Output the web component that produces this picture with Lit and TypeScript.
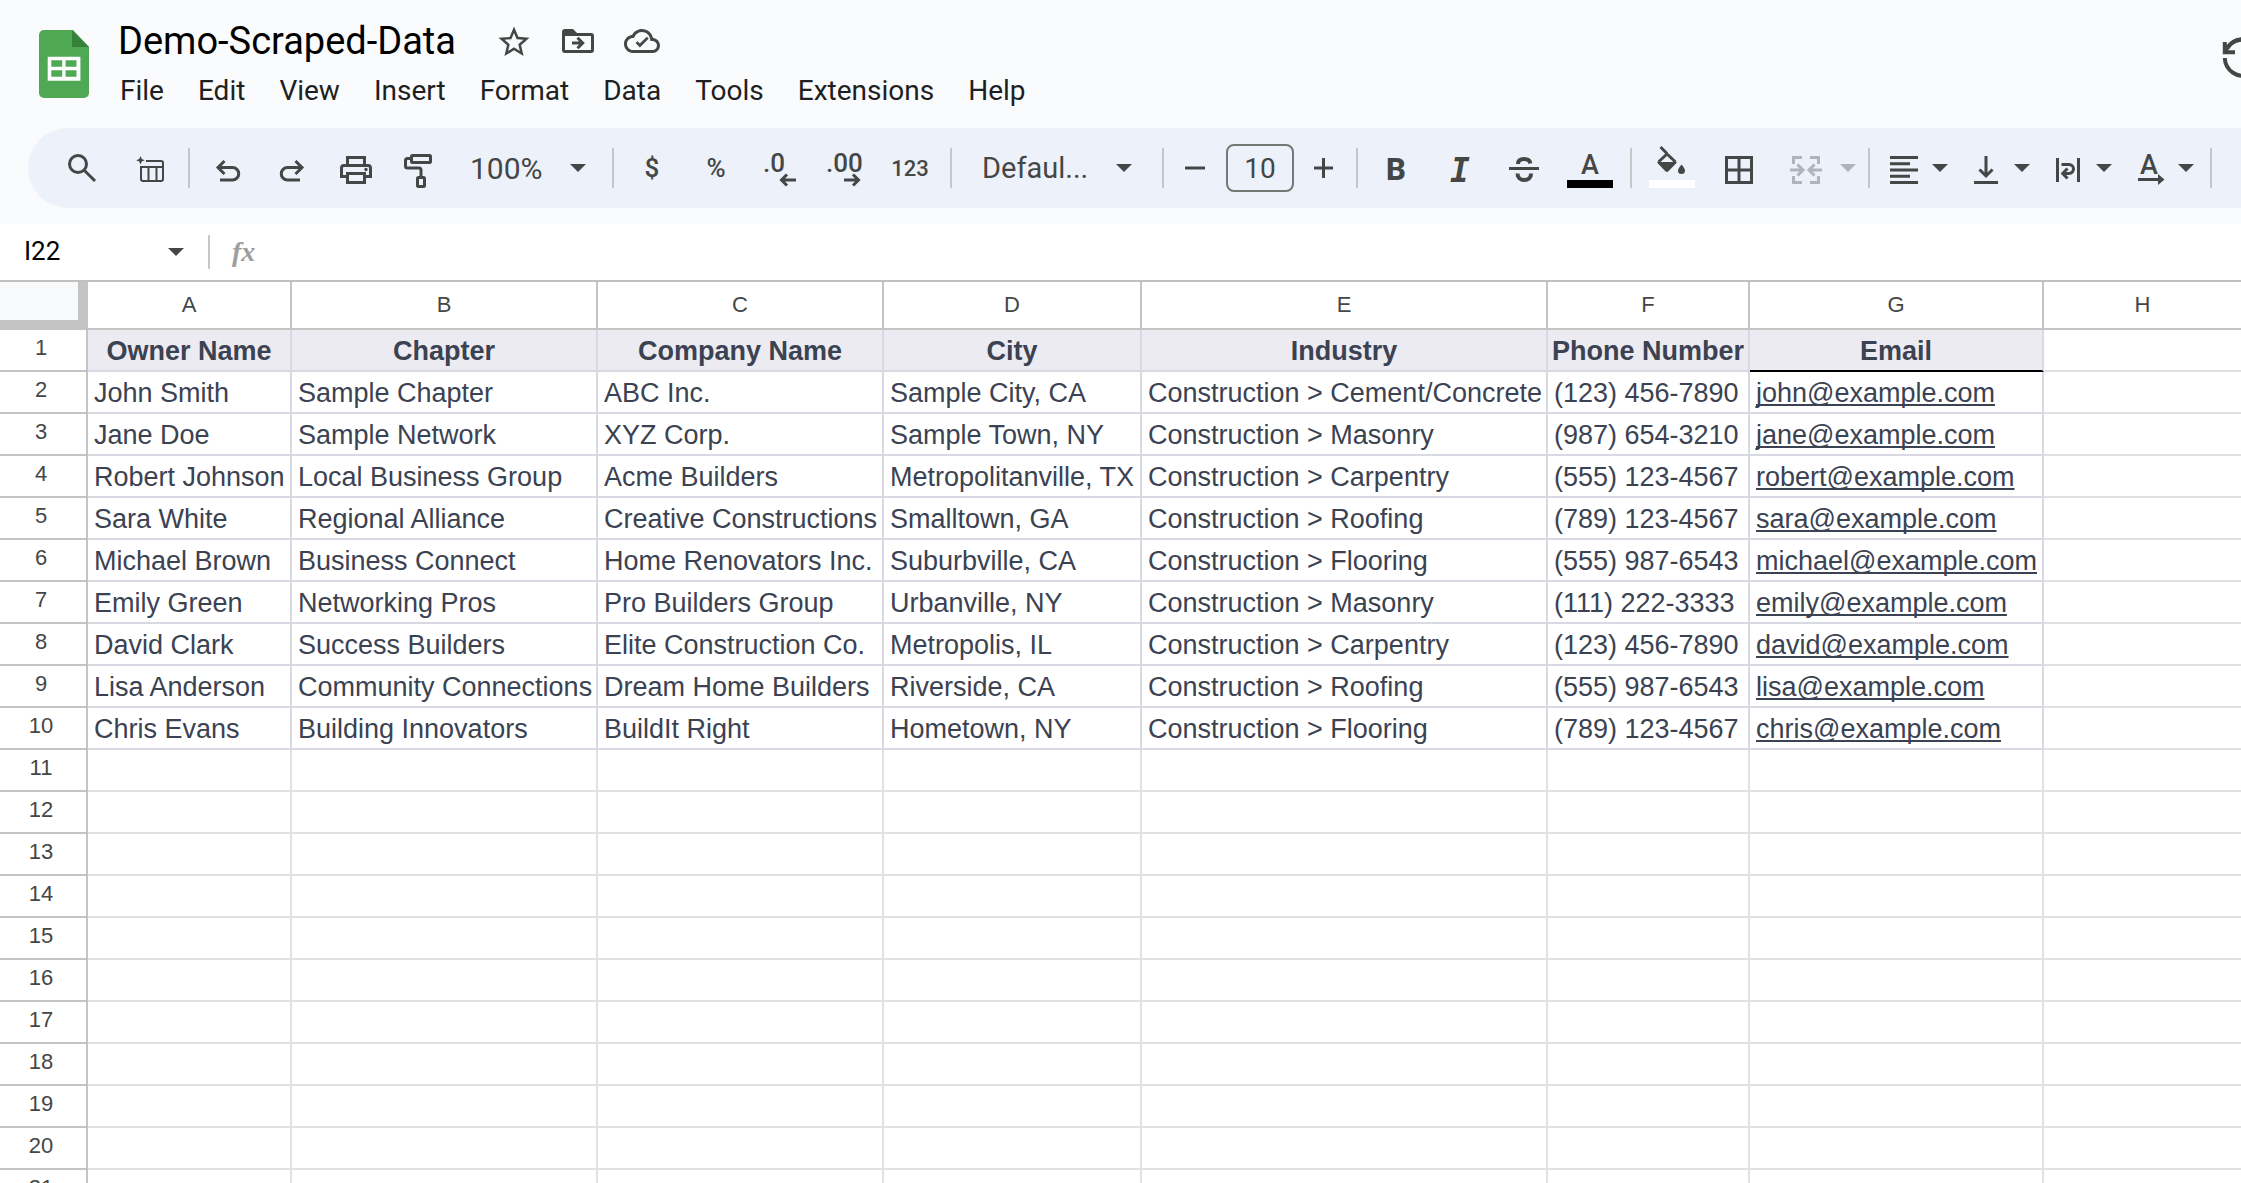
import { LitElement, css, html, svg, nothing, type SVGTemplateResult } from "lit";
import { customElement, property } from "lit/decorators.js";
import { classMap } from "lit/directives/class-map.js";

/* ---------- data ---------- */

const MENUS = ["File", "Edit", "View", "Insert", "Format", "Data", "Tools", "Extensions", "Help"];

const COLUMNS = ["A", "B", "C", "D", "E", "F", "G", "H"];

const HEADINGS = ["Owner Name", "Chapter", "Company Name", "City", "Industry", "Phone Number", "Email"];

const RECORDS: string[][] = [
  ["John Smith", "Sample Chapter", "ABC Inc.", "Sample City, CA", "Construction > Cement/Concrete", "(123) 456-7890", "john@example.com"],
  ["Jane Doe", "Sample Network", "XYZ Corp.", "Sample Town, NY", "Construction > Masonry", "(987) 654-3210", "jane@example.com"],
  ["Robert Johnson", "Local Business Group", "Acme Builders", "Metropolitanville, TX", "Construction > Carpentry", "(555) 123-4567", "robert@example.com"],
  ["Sara White", "Regional Alliance", "Creative Constructions", "Smalltown, GA", "Construction > Roofing", "(789) 123-4567", "sara@example.com"],
  ["Michael Brown", "Business Connect", "Home Renovators Inc.", "Suburbville, CA", "Construction > Flooring", "(555) 987-6543", "michael@example.com"],
  ["Emily Green", "Networking Pros", "Pro Builders Group", "Urbanville, NY", "Construction > Masonry", "(111) 222-3333", "emily@example.com"],
  ["David Clark", "Success Builders", "Elite Construction Co.", "Metropolis, IL", "Construction > Carpentry", "(123) 456-7890", "david@example.com"],
  ["Lisa Anderson", "Community Connections", "Dream Home Builders", "Riverside, CA", "Construction > Roofing", "(555) 987-6543", "lisa@example.com"],
  ["Chris Evans", "Building Innovators", "BuildIt Right", "Hometown, NY", "Construction > Flooring", "(789) 123-4567", "chris@example.com"],
];

const ROW_COUNT = 21;

/* ---------- icons, all drawn on a 48 x 48 canvas ---------- */

const ICONS: Record<string, SVGTemplateResult> = {
  star: svg`<path class="fill" transform="translate(5.400 6.500) scale(1.550)" d="M22 9.24l-7.19-.62L12 2 9.19 8.63 2 9.24l5.46 4.73L5.82 21 12 17.27 18.18 21l-1.63-7.03L22 9.24zM12 15.4l-3.76 2.27 1-4.28-3.32-2.88 4.38-.38L12 6.1l1.71 4.04 4.38.38-3.32 2.88 1 4.28L12 15.4z"/>`,
  move: svg`<path class="fill" d="M8 15a3 3 0 0 1 3-3h8l4 4h14a3 3 0 0 1 3 3v14a3 3 0 0 1-3 3H11a3 3 0 0 1-3-3zM11 19v14h26V19z" fill-rule="evenodd"/><path d="M18 26h10M23.5 20.8l5.2 5.2-5.2 5.2"/>`,
  cloud: svg`<path class="fill" transform="translate(6 6) scale(1.5)" d="M19.35 10.04C18.67 6.59 15.64 4 12 4 9.11 4 6.6 5.64 5.35 8.04 2.34 8.36 0 10.91 0 14c0 3.31 2.69 6 6 6h13c2.76 0 5-2.24 5-5 0-2.64-2.05-4.78-4.65-4.96zM19 18H6c-2.21 0-4-1.79-4-4 0-2.05 1.53-3.76 3.56-3.97l1.07-.11.5-.95C8.08 7.14 9.94 6 12 6c2.62 0 4.88 1.86 5.39 4.43l.3 1.5 1.53.11c1.56.1 2.78 1.41 2.78 2.96 0 1.65-1.35 3-3 3zM10.6 16.3l-2.9-2.9 1.3-1.3 1.6 1.6 4.6-4.6 1.3 1.3z"/>`,
  history: svg`<path class="thick" d="M5.8 24a18.3 18.3 0 1 0 2.4-9.6"/><path class="thick" d="M5.8 8v10.3H16M6.5 17C10 9.500 16.500 5.700 24 5.700"/>`,
  search: svg`<circle cx="20" cy="20" r="8.500"/><path d="M26.200 26.200L37 37"/>`,
  tables: svg`<path class="fill" d="M14.500 12l1.300 3 3 1.300-3 1.300-1.300 3-1.300-3-3-1.300 3-1.300z"/><path class="thin" d="M20 17h15a2 2 0 0 1 2 2v16a2 2 0 0 1-2 2H17a2 2 0 0 1-2-2V23h22M22.500 23v14M30.500 23v14"/>`,
  undo: svg`<path d="M14 23.500h14.500a6.250 6.250 0 0 1 0 12.500H16M20.500 17l-6.500 6.500 6.500 6.500"/>`,
  redo: svg`<path d="M34 23.500H19.500a6.250 6.250 0 0 0 0 12.500H32M27.500 17l6.500 6.500-6.500 6.500"/>`,
  print: svg`<path d="M15.500 21v-7.500h17V21M14 32.500H9.500V24a2.500 2.500 0 0 1 2.500-2.500h24a2.500 2.500 0 0 1 2.500 2.500v8.500H34M15.500 29.500h17v9h-17z"/><circle class="fill" cx="34" cy="25.500" r="1.700"/>`,
  paint: svg`<rect x="15.500" y="11.500" width="19" height="7" rx="1"/><path d="M15 14.500h-3.500a2 2 0 0 0-2 2V22a2 2 0 0 0 2 2H23a2 2 0 0 1 2 2v7"/><rect x="21.500" y="33.500" width="7" height="9" rx="1"/>`,
  lessDecimals: svg`<text x="7" y="28" class="label">.0</text><path d="M40 36H26M31 30.500L25.500 36l5.500 5.500"/>`,
  moreDecimals: svg`<text x="6" y="28" class="label">.00</text><path d="M24 36h14M33 30.500l5.500 5.500-5.500 5.500"/>`,
  minus: svg`<path d="M14 24h20"/>`,
  plus: svg`<path d="M13 24h19M22.500 14v20"/>`,
  bold: svg`<text x="24" y="36" text-anchor="middle" class="bold">B</text>`,
  italic: svg`<text x="24" y="38" text-anchor="middle" class="italic">I</text>`,
  strike: svg`<path d="M9 24.500h30"/><path class="thick" d="M18 20c0-3.500 2.500-5 6-5s6 1.500 6.300 4.500M17.500 29.500c0 4 3 6.500 6.700 6.500s7-2 6.800-6.500"/>`,
  textColor: svg`<text x="24" y="30" text-anchor="middle" class="letter">A</text><rect class="ink" x="1" y="36" width="46" height="8"/>`,
  fill: svg`<path d="M12.500 3l6.500 6.500M10.500 18l8.500-8 8.500 8"/><path class="fill" d="M9.300 18h19.400a2 2 0 0 1-.7 1.500l-7.600 7.800a2.200 2.200 0 0 1-3 0l-7.500-7.800a2 2 0 0 1-.6-1.500zM33.500 20.500c2.500 3.200 3.500 4.600 3.500 6a3.500 3.500 0 0 1-7 0c0-1.400 1-2.800 3.500-6z"/><rect class="paper" x="1" y="36" width="46" height="8"/>`,
  borders: svg`<path d="M12.500 13.500h25v25h-25zM12.500 26h25M25 13.500v25"/>`,
  merge: svg`<path d="M22 13.500h-8.500V20M13.500 32v6.500H22M30 13.500h8.500V20M38.500 32v6.500H30M10 26h12M17.500 20.500L23 26l-5.500 5.500M42 26H30M34.500 20.500L29 26l5.500 5.500"/>`,
  alignLeft: svg`<path d="M10 13.500h28M10 19.700h20M10 26h28M10 32.200h20M10 38.500h28"/>`,
  alignBottom: svg`<path d="M24 12v19M17.500 25.500L24 32l6.500-6.500M12 38.500h24"/>`,
  wrap: svg`<path d="M13.500 14v24M34.500 14v24M17.500 20.500h7.500a4.500 4.500 0 0 1 0 9H20M23.500 24.500l-4.800 5 4.800 5"/>`,
  rotate: svg`<text x="23" y="30" text-anchor="middle" class="letter">A</text><path d="M12 35.500h21"/><path class="fill" d="M32 30l6.500 5.500-6.500 5.500z"/>`,
};

@customElement("sheet-icon")
class SheetIcon extends LitElement {
  @property() name = "";

  static styles = css`
    :host { display: block; width: 48px; height: 48px; flex: none; }
    svg { display: block; width: 48px; height: 48px; overflow: visible; fill: none; stroke: currentColor; stroke-width: 3; }
    .fill { fill: currentColor; stroke: none; }
    .thin { stroke-width: 2; }
    .thick { stroke-width: 4; }
    .ink { fill: #000; stroke: none; }
    .paper { fill: #fff; stroke: none; }
    text { fill: currentColor; stroke: none; font-family: Roboto, "Liberation Sans", sans-serif; font-size: 27px; font-weight: 500; }
    .label { font-size: 26px; }
    .bold { font-size: 31px; font-weight: 800; }
    .italic { font-family: "DejaVu Sans Mono", "Liberation Mono", monospace; font-size: 33px; font-weight: 700; font-style: italic; }
  `;

  render() {
    return html`<svg viewBox="0 0 48 48" aria-hidden="true">${ICONS[this.name] ?? nothing}</svg>`;
  }
}

@customElement("sheet-caret")
class SheetCaret extends LitElement {
  static styles = css`
    :host { display: block; flex: none; width: 16px; height: 8px; pointer-events: none; }
    svg { display: block; fill: currentColor; }
  `;

  render() {
    return html`<svg width="16" height="8" viewBox="0 0 16 8" aria-hidden="true"><path d="M0 0h16L8 8z" /></svg>`;
  }
}

/* ---------- title and menus ---------- */

@customElement("sheet-header")
class SheetHeader extends LitElement {
  static styles = css`
    :host { display: flex; align-items: flex-start; height: 128px; overflow: hidden; color: #444746; }
    .logo { display: block; margin: 29px 0 0 38px; flex: none; }
    .green { fill: #4fa954; }
    .fold { fill: #36803a; }
    .white { fill: #fff; }
    .main { display: flex; flex-direction: column; margin-left: 28px; padding-top: 17px; }
    .title-row { display: flex; align-items: center; height: 48px; }
    h1 { margin: 0 26px 0 0; font-size: 38px; line-height: 48px; font-weight: 400; color: #000; white-space: nowrap; }
    button { font: inherit; color: inherit; background: none; border: 0; margin: 0; padding: 0; cursor: pointer; }
    .icon { display: flex; justify-content: center; width: 64px; }
    .menus { display: flex; margin-top: 8px; margin-left: -15px; }
    .menu { padding: 0 17px; font-size: 28px; line-height: 36px; color: #1f1f1f; }
    .history { margin: 34px -26px 0 auto; }
  `;

  render() {
    return html`
      <svg class="logo" width="52" height="70" viewBox="0 0 52 70" role="img" aria-label="Sheets">
        <path class="green" d="M6 1h29l16 17v46a5 5 0 0 1-5 5H6a5 5 0 0 1-5-5V6a5 5 0 0 1 5-5z" />
        <path class="fold" d="M34 1l17 17H34z" />
        <path class="white" fill-rule="evenodd" d="M9.700 27.700h32.700v24H9.700zM13.300 31.300v6.500h10.900v-6.500zM27.600 31.300v6.500h10.900v-6.500zM13.300 41.200v6.500h10.900v-6.500zM27.600 41.200v6.500h10.900v-6.500z" />
      </svg>
      <div class="main">
        <div class="title-row">
          <h1>Demo-Scraped-Data</h1>
          <button class="icon" aria-label="Star"><sheet-icon name="star"></sheet-icon></button>
          <button class="icon" aria-label="Move"><sheet-icon name="move"></sheet-icon></button>
          <button class="icon" aria-label="Document status"><sheet-icon name="cloud"></sheet-icon></button>
        </div>
        <nav class="menus" aria-label="Menus">${MENUS.map((m) => html`<button class="menu">${m}</button>`)}</nav>
      </div>
      <button class="history" aria-label="Version history"><sheet-icon name="history"></sheet-icon></button>
    `;
  }
}

/* ---------- toolbar ---------- */

@customElement("sheet-toolbar")
class SheetToolbar extends LitElement {
  static styles = css`
    :host { display: block; margin: 0 0 16px 28px; overflow: hidden; }
    .bar { display: flex; align-items: center; height: 80px; padding-left: 22px; border-radius: 40px 0 0 40px; background: #edf2fa; color: #444746; }
    .bar > * { flex: none; }
    button { display: flex; align-items: center; justify-content: center; width: 64px; height: 56px; margin: 0; padding: 0; border: 0; background: none; color: inherit; font: inherit; font-size: 26px; font-weight: 500; cursor: pointer; }
    .gap { margin-right: 4px; }
    .wide { width: 68px; }
    .step { width: 50px; }
    .small { font-size: 22px; }
    .drop { width: 82px; justify-content: flex-start; gap: 4px; padding-left: 4px; }
    .merge { width: 92px; gap: 12px; padding-left: 10px; }
    button:disabled { color: #b0b3b8; cursor: default; }
    .sep { width: 2px; height: 40px; margin: 0 6px; background: #c7c7c7; }
    .pick { display: grid; align-items: center; }
    .pick > * { grid-area: 1 / 1; }
    .pick sheet-caret { justify-self: end; margin-right: 24px; }
    select { appearance: none; box-sizing: border-box; width: 100%; height: 56px; margin: 0; padding: 0 52px 0 18px; border: 0; background: none; color: inherit; font: inherit; font-size: 30px; }
    .zoom { width: 154px; }
    .zoom sheet-caret { margin-right: 20px; }
    .zoom select { padding-right: 36px; }
    .font { width: 198px; }
    .font select { padding-left: 24px; font-size: 29px; }
    .size { box-sizing: border-box; width: 68px; height: 48px; margin: 0 6px; padding: 0; border: 2px solid #747775; border-radius: 8px; background: none; color: inherit; font: inherit; font-size: 28px; text-align: center; }
  `;

  private tool(name: string, label: string, cls = "") {
    return html`<button class=${cls} aria-label=${label}><sheet-icon name=${name}></sheet-icon></button>`;
  }

  private drop(name: string, label: string) {
    return html`<button class="drop" aria-label=${label}><sheet-icon name=${name}></sheet-icon><sheet-caret></sheet-caret></button>`;
  }

  render() {
    const sep = html`<span class="sep"></span>`;
    return html`
      <div class="bar" role="toolbar" aria-label="Main">
        ${this.tool("search", "Search the menus", "gap")} ${this.tool("tables", "Tables")} ${sep}
        ${this.tool("undo", "Undo")} ${this.tool("redo", "Redo")} ${this.tool("print", "Print")} ${this.tool("paint", "Paint format")}
        <label class="pick zoom"><select aria-label="Zoom"><option>100%</option></select><sheet-caret></sheet-caret></label>
        ${sep}
        <button aria-label="Format as currency">$</button>
        <button aria-label="Format as percent">%</button>
        ${this.tool("lessDecimals", "Decrease decimal places")} ${this.tool("moreDecimals", "Increase decimal places")}
        <button class="wide small" aria-label="More formats">123</button>
        ${sep}
        <label class="pick font"><select aria-label="Font"><option>Defaul...</option></select><sheet-caret></sheet-caret></label>
        ${sep}
        ${this.tool("minus", "Decrease font size", "step")}
        <input class="size" aria-label="Font size" value="10" />
        ${this.tool("plus", "Increase font size", "step")} ${sep}
        ${this.tool("bold", "Bold")} ${this.tool("italic", "Italic")} ${this.tool("strike", "Strikethrough")}
        ${this.tool("textColor", "Text color", "wide")} ${sep}
        ${this.tool("fill", "Fill color", "wide")} ${this.tool("borders", "Borders")}
        <button class="drop merge" disabled aria-label="Merge cells"><sheet-icon name="merge"></sheet-icon><sheet-caret></sheet-caret></button>
        ${sep}
        ${this.drop("alignLeft", "Horizontal align")} ${this.drop("alignBottom", "Vertical align")}
        ${this.drop("wrap", "Text wrapping")} ${this.drop("rotate", "Text rotation")} ${sep}
      </div>
    `;
  }
}

/* ---------- name box and formula bar ---------- */

@customElement("sheet-formula-bar")
class SheetFormulaBar extends LitElement {
  static styles = css`
    :host { display: flex; align-items: center; height: 56px; background: #fff; color: #444746; }
    input { border: 0; margin: 0; padding: 0; background: none; font: inherit; font-size: 26px; line-height: 32px; color: #000; }
    .name { width: 120px; padding: 0 0 2px 24px; }
    button { display: flex; align-items: center; justify-content: center; width: 64px; height: 40px; margin: 0; padding: 0; border: 0; background: none; color: inherit; }
    .sep { width: 2px; height: 34px; background: #c7c7c7; }
    .fx { width: 28px; margin: 0 22px 0 22px; font: italic 700 28px/36px "Liberation Serif", serif; color: #9e9e9e; }
    .formula { flex: 1; min-width: 0; }
  `;

  render() {
    return html`
      <input class="name" aria-label="Name box" value="I22" />
      <button aria-label="Named ranges"><sheet-caret></sheet-caret></button>
      <span class="sep"></span>
      <label class="fx" for="formula">fx</label>
      <input id="formula" class="formula" />
    `;
  }
}

/* ---------- grid ---------- */

@customElement("sheet-grid")
class SheetGrid extends LitElement {
  static styles = css`
    :host { display: block; overflow: hidden; border-top: 2px solid #c0c0c0; background: #fff; }
    table { width: 100%; table-layout: fixed; border-collapse: separate; border-spacing: 0; font-family: "Liberation Sans", Arial, sans-serif; color: #3b4252; }
    .w-index { width: 88px; }
    .w-a { width: 204px; }
    .w-b { width: 306px; }
    .w-c { width: 286px; }
    .w-d { width: 258px; }
    .w-e { width: 406px; }
    .w-f { width: 202px; }
    .w-g { width: 294px; }
    th, td { box-sizing: border-box; height: 42px; padding: 2px 6px 0; border: 0 solid #e1e1e1; border-width: 0 2px 2px 0; font-size: 27px; line-height: 38px; font-weight: 400; text-align: left; white-space: nowrap; }
    thead th, .index { border-color: #c4c4c4; font-size: 22px; text-align: center; color: #444746; }
    thead th { height: 48px; padding: 0; line-height: 46px; }
    .index { padding: 0 4px 4px 0; line-height: 36px; }
    tr > :last-child { border-right-width: 0; }
    thead .corner { border-color: #c4c4c4; border-bottom-width: 10px; border-right-width: 10px; background: #f8f9fa; }
    .data { border-color: #d9d9e3; }
    .heading { background: #ecebf1; font-weight: 700; text-align: center; padding: 2px 0 0; }
    .marked { border-bottom-color: #000; }
    a { color: inherit; text-decoration: underline; text-decoration-thickness: 2px; text-underline-offset: 2px; text-decoration-skip-ink: none; }
  `;

  private row(index: number) {
    const record = index > 0 ? RECORDS[index - 1] : undefined;
    return html`<tr>
      <th class="index" scope="row">${index + 1}</th>
      ${COLUMNS.map((_, c) => {
        if (index === 0 && c < HEADINGS.length) {
          return html`<td class=${classMap({ data: true, heading: true, marked: c === 6 })}>${HEADINGS[c]}</td>`;
        }
        const value = record?.[c];
        if (!value) return html`<td></td>`;
        return html`<td class="data">${c === 6 ? html`<a href=${"mailto:" + value}>${value}</a>` : value}</td>`;
      })}
    </tr>`;
  }

  render() {
    return html`
      <table>
        <colgroup>
          <col class="w-index" /><col class="w-a" /><col class="w-b" /><col class="w-c" /><col class="w-d" />
          <col class="w-e" /><col class="w-f" /><col class="w-g" /><col />
        </colgroup>
        <thead>
          <tr><td class="corner"></td>${COLUMNS.map((c) => html`<th scope="col">${c}</th>`)}</tr>
        </thead>
        <tbody>${Array.from({ length: ROW_COUNT }, (_, i) => this.row(i))}</tbody>
      </table>
    `;
  }
}

@customElement("app-root")
class AppRoot extends LitElement {
  static styles = css`
    :host { display: flex; flex-direction: column; height: 100vh; overflow: hidden; background: #f9fbfd; font-family: Roboto, "Liberation Sans", Arial, sans-serif; }
    sheet-grid { flex: 1; min-height: 0; }
    sheet-header, sheet-toolbar, sheet-formula-bar { flex: none; }
  `;

  render() {
    return html`
      <sheet-header></sheet-header>
      <sheet-toolbar></sheet-toolbar>
      <sheet-formula-bar></sheet-formula-bar>
      <sheet-grid></sheet-grid>
    `;
  }
}
